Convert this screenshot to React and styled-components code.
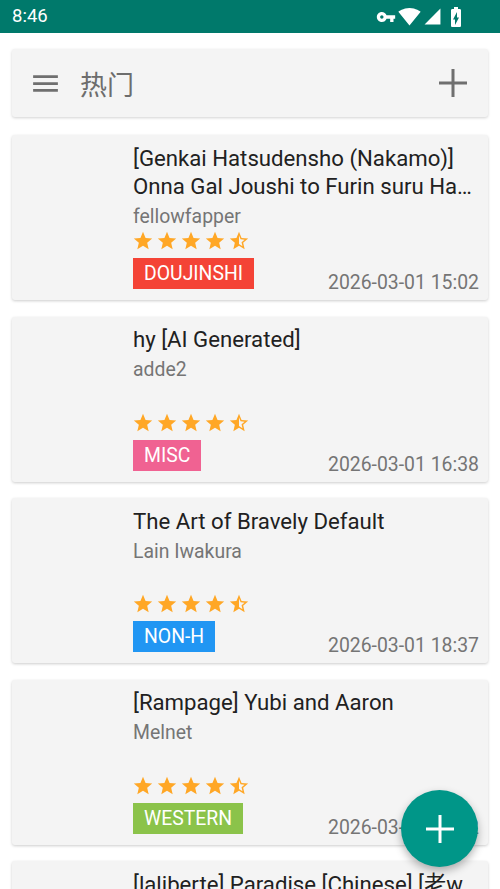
import React from 'react'
import styled, { createGlobalStyle } from 'styled-components';

const GlobalStyle = createGlobalStyle`
  html, body {
    margin: 0;
    padding: 0;
    background: #fff;
    overflow: hidden;
  }
  body {
    font-family: Roboto, 'Noto Sans CJK SC', sans-serif;
  }
`;

const galleries = [
  {
    title: ['[Genkai Hatsudensho (Nakamo)]', 'Onna Gal Joushi to Furin suru Hanashi'],
    uploader: 'fellowfapper',
    category: 'DOUJINSHI',
    color: '#F44336',
    posted: '2026-03-01 15:02',
  },
  {
    title: ['hy [AI Generated]'],
    uploader: 'adde2',
    category: 'MISC',
    color: '#F06292',
    posted: '2026-03-01 16:38',
  },
  {
    title: ['The Art of Bravely Default'],
    uploader: 'Lain Iwakura',
    category: 'NON-H',
    color: '#2196F3',
    posted: '2026-03-01 18:37',
  },
  {
    title: ['[Rampage] Yubi and Aaron'],
    uploader: 'Melnet',
    category: 'WESTERN',
    color: '#8BC34A',
    posted: '2026-03-01 19:12',
  },
  {
    title: ['[laliberte] Paradise [Chinese] [老w', '个人汉化]'],
    uploader: 'laliberte',
    category: 'DOUJINSHI',
    color: '#F44336',
    posted: '2026-03-01 19:40',
  },
];

const STAR = 'M12 17.27L18.18 21l-1.64-7.03L22 9.24l-7.19-.61L12 2 9.19 8.63 2 9.24l5.46 4.73L5.82 21z';
const STAR_HALF = 'M22 9.24l-7.19-.62L12 2 9.19 8.63 2 9.24l5.46 4.73L5.82 21 12 17.27 18.18 21l-1.63-7.03L22 9.24zM12 15.4V6.1l1.71 4.04 4.38.38-3.32 2.88 1 4.28L12 15.4z';

function Rating({ value }) {
  const stars = [];
  for (let i = 1; i <= 5; i++) {
    const half = value < i && value > i - 1;
    stars.push(
      <svg key={i} width="22" height="22" viewBox="0 0 24 24">
        <path d={half ? STAR_HALF : STAR} fill="#FFA726" />
      </svg>
    );
  }
  return <Stars>{stars}</Stars>;
}

function StatusIcons() {
  return (
    <Icons>
      <svg width="20" height="20" viewBox="0 0 24 24">
        <path fill="#fff" d="M12.65 10C11.83 7.67 9.61 6 7 6c-3.31 0-6 2.69-6 6s2.69 6 6 6c2.61 0 4.83-1.67 5.65-4H17v4h4v-4h2v-4H12.65zM7 14c-1.1 0-2-.9-2-2s.9-2 2-2 2 .9 2 2-.9 2-2 2z" />
      </svg>
      <svg width="23" height="23" viewBox="0 0 24 24">
        <path fill="#fff" d="M12.01 21.49L23.64 7c-.45-.34-4.93-4-11.64-4C5.28 3 .81 6.66.36 7l11.63 14.49.01.01.01-.01z" />
      </svg>
      <svg width="19" height="19" viewBox="0 0 24 24">
        <path fill="#fff" d="M2 22h20V2z" />
      </svg>
      <svg width="24" height="24" viewBox="0 0 24 24">
        <path fill="#fff" d="M15.67 4H14V2h-4v2H8.33C7.6 4 7 4.6 7 5.33v15.33C7 21.4 7.6 22 8.33 22h7.33c.74 0 1.34-.6 1.34-1.33V5.33C17 4.6 16.4 4 15.67 4zM11 20v-5.5H9L13 7v5.5h2L11 20z" />
      </svg>
    </Icons>
  );
}

export default function App() {
  return (
    <Screen>
      <GlobalStyle />
      <StatusBar>
        <Clock>8:46</Clock>
        <StatusIcons />
      </StatusBar>

      <List>
        <SearchBar>
          <svg width="33" height="33" viewBox="0 0 24 24">
            <path fill="#6f6f6f" d="M3 18h18v-2H3v2zm0-5h18v-2H3v2zm0-7v2h18V6H3z" />
          </svg>
          <BarTitle>热门</BarTitle>
          <svg width="30" height="30" viewBox="0 0 30 30">
            <path d="M15 1v28M1 15h28" stroke="#6f6f6f" strokeWidth="3" fill="none" />
          </svg>
        </SearchBar>

        {galleries.map((g, i) => (
          <Card key={i}>
            <Thumb />
            <Info>
              <Title>
                {g.title.map((line, j) => (
                  <TitleLine key={j}>{line}</TitleLine>
                ))}
              </Title>
              <Uploader>{g.uploader}</Uploader>
              <Rating value={4.5} />
              <Footer>
                <Category color={g.color}>{g.category}</Category>
                <Posted>{g.posted}</Posted>
              </Footer>
            </Info>
          </Card>
        ))}
      </List>

      <Fab>
        <svg width="30" height="30" viewBox="0 0 30 30">
          <path d="M15 1v28M1 15h28" stroke="#fff" strokeWidth="3" fill="none" />
        </svg>
      </Fab>
    </Screen>
  )
}

const Screen = styled.div`
  height: 100vh;
  overflow: hidden;
  position: relative;
  background: #fff;
`;

const StatusBar = styled.div`
  height: 33px;
  background-color: #00796B;
  display: flex;
  align-items: center;
  justify-content: space-between;
  padding: 0 32px 0 12px;
`;

const Clock = styled.span`
  color: #fff;
  font-size: 18.5px;
  line-height: 1;
`;

const Icons = styled.div`
  display: flex;
  align-items: center;
  gap: 2px;
`;

const List = styled.div`
  display: flex;
  flex-direction: column;
  gap: 16.5px;
  padding: 16px 12px 0;
`;

const SearchBar = styled.div`
  height: 68px;
  background-color: #f4f4f4;
  border-radius: 3px;
  box-shadow: 0 1px 3px rgba(0, 0, 0, 0.18);
  display: flex;
  align-items: center;
  padding: 0 20px 0 17px;
  margin-bottom: 1.5px;
  flex-shrink: 0;
`;

const BarTitle = styled.div`
  flex: 1;
  margin-left: 18px;
  color: #6d6d6d;
  font-size: 27px;
  font-family: 'Noto Sans CJK SC', sans-serif;
`;

const Card = styled.div`
  height: 165px;
  flex-shrink: 0;
  background-color: #f4f4f4;
  border-radius: 3px;
  box-shadow: 0 1px 3px rgba(0, 0, 0, 0.2);
  display: flex;
  box-sizing: border-box;
`;

const Thumb = styled.div`
  width: 121px;
  flex-shrink: 0;
`;

const Info = styled.div`
  flex: 1;
  min-width: 0;
  display: flex;
  flex-direction: column;
  padding: 8.5px 9px 11px 0;
`;

const Title = styled.div`
  color: #212121;
  font-size: 22.2px;
  line-height: 28px;
`;

const TitleLine = styled.div`
  white-space: nowrap;
  overflow: hidden;
  text-overflow: ellipsis;
`;

const Uploader = styled.div`
  margin-top: 5px;
  color: #757575;
  font-size: 19.4px;
  line-height: 24px;
  flex: 1;
`;

const Stars = styled.div`
  display: flex;
  gap: 2px;
  margin-left: -1px;
  margin-bottom: 6px;
  svg { display: block; }
`;

const Footer = styled.div`
  display: flex;
  align-items: flex-end;
  justify-content: space-between;
`;

const Category = styled.div`
  background-color: ${p => p.color};
  color: #fff;
  font-size: 19.4px;
  height: 31px;
  line-height: 31px;
  padding: 0 11px;
`;

const Posted = styled.div`
  color: #757575;
  font-size: 19.4px;
  line-height: 20px;
  margin-bottom: -4px;
`;

const Fab = styled.div`
  position: absolute;
  right: 22px;
  bottom: 22px;
  width: 77px;
  height: 77px;
  border-radius: 50%;
  background-color: #009688;
  box-shadow: 0 4px 8px rgba(0, 0, 0, 0.3);
  display: flex;
  align-items: center;
  justify-content: center;
`;
